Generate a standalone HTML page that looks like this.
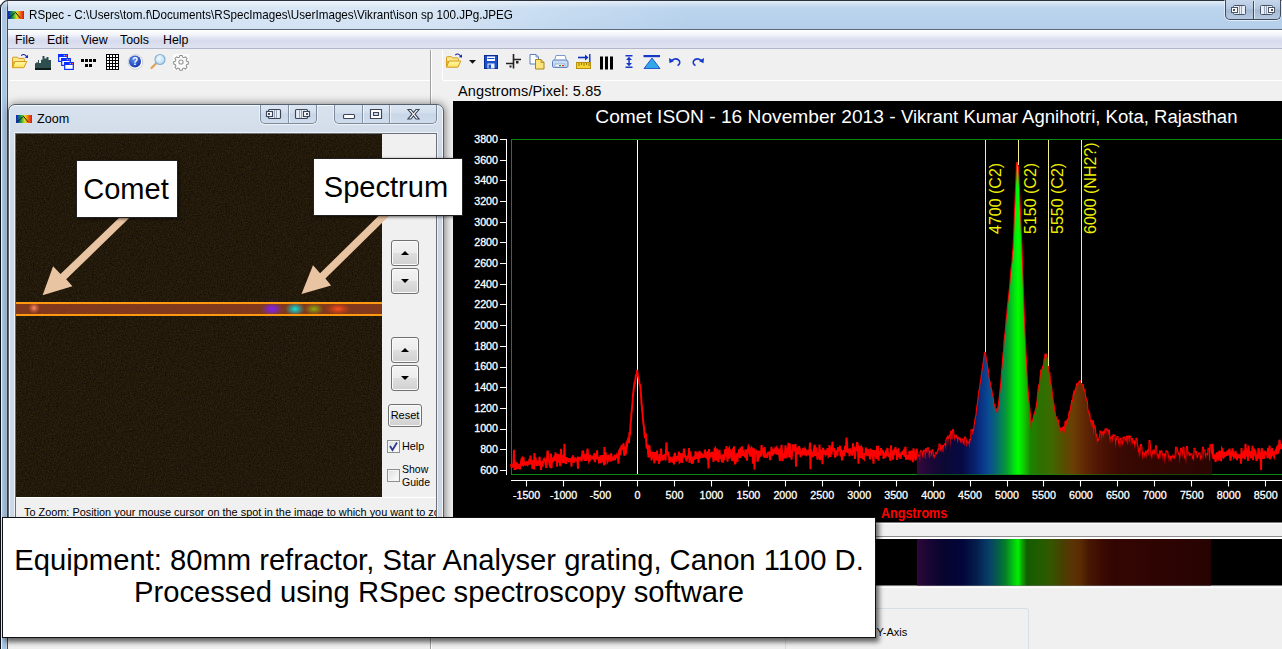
<!DOCTYPE html>
<html><head><meta charset="utf-8"><title>RSpec</title>
<style>
*{box-sizing:border-box;margin:0;padding:0}
html,body{width:1282px;height:649px;overflow:hidden;background:#f0f0f0;font-family:"Liberation Sans",sans-serif;font-size:12px;color:#000}
.abs{position:absolute}
#titlebar{left:0;top:0;width:1282px;height:29px;background:linear-gradient(#bdd5ee 0,#b9d3ed 50%,#b5cfeb 100%);border-top:1px solid #2c323c}
#title{left:29px;top:8px;font-size:12.6px;white-space:nowrap;transform:scaleX(.926);transform-origin:0 0}
#lborder{left:0;top:0;width:8px;height:649px;background:linear-gradient(90deg,#0c1018 0,#0c1018 1px,#eaf3fc 1px,#eaf3fc 2px,#abc9e8 2px,#a6c2e0 6px,#c5d2e0 6px,#c5d2e0 7px,#3c4754 7px,#3c4754 8px)}
#menubar{left:8px;top:29px;width:1274px;height:20px;background:linear-gradient(#ffffff 0,#f3f5fa 25%,#e0e4f1 45%,#d6daec 60%,#dfe3f1 100%);border-top:1px solid #5c6a7c;border-bottom:1px solid #b2b7cb}
#menubar span{position:absolute;top:3px;font-size:12.4px}
.hl{height:1px;background:#fff}
.vl{width:1px}
/* zoom window */
#zw{left:8px;top:104px;width:436px;height:440px;background:linear-gradient(180deg,#d8e2ee,#d3dde9 30px,#cdd8e5 60px);border:1px solid #55616f;border-radius:7px 7px 0 0;box-shadow:1px 0 8px rgba(0,0,0,.5),inset 0 0 0 1px rgba(255,255,255,.75)}
#zw .inner{left:6px;top:28px;width:422px;height:420px;background:#f0f0f0;border:1px solid #6a7078;box-shadow:0 0 0 1px rgba(255,255,255,.6)}
#zimg{left:16px;top:134px;width:366px;height:363px;background:#1c1309;overflow:hidden}
.btn{border:1px solid #707070;border-radius:3px;background:linear-gradient(#f3f3f3 0,#ececec 48%,#dedede 52%,#d0d0d0 100%);box-shadow:inset 0 0 0 1px #fbfbfb}
.tri-up{width:0;height:0;border-left:4px solid transparent;border-right:4px solid transparent;border-bottom:4px solid #000}
.tri-dn{width:0;height:0;border-left:4px solid transparent;border-right:4px solid transparent;border-top:4px solid #000}
.cb{width:13px;height:13px;border:1px solid #8e8f8f;background:linear-gradient(135deg,#dcdcdc,#fff);box-shadow:inset 0 0 0 1px #f4f4f4}
.label{background:#fff;border:1px solid #222;box-shadow:1px 1px 3px rgba(0,0,0,.6);text-align:center;font-size:29.050px}
#cap{left:2px;top:517px;width:874px;height:121px;background:#fff;border:1px solid #111;box-shadow:3px 4px 5px rgba(0,0,0,.6);text-align:center;font-size:29.2px;line-height:32.6px;padding-top:25.5px;white-space:nowrap}
.capbtns{border:1px solid #7c8a9c;border-top:none;border-radius:0 0 5px 5px;background:linear-gradient(#dde7f3 0,#d2deed 45%,#c8d6e8 50%,#cfdcec 100%);box-shadow:0 1px 0 0 rgba(255,255,255,.6),1px 0 0 0 rgba(255,255,255,.5),-1px 0 0 0 rgba(255,255,255,.5)}
.capdiv{width:1px;height:18px;background:#8492a4;box-shadow:1px 0 0 rgba(255,255,255,.6)}
</style></head><body>

<div class="abs" id="titlebar"></div>
<div class="abs" style="left:1px;top:1px;width:700px;height:28px;background:linear-gradient(90deg,rgba(255,255,255,.42) 0,rgba(255,255,255,.42) 430px,rgba(255,255,255,.18) 560px,rgba(255,255,255,0) 690px)"></div>
<div class="abs" id="lborder"></div>
<div class="abs" style="left:1px;top:1px;width:1281px;height:7px;background:linear-gradient(rgba(255,255,255,.55),rgba(255,255,255,0))"></div>
<svg class="abs" style="left:0;top:0" width="10" height="10" viewBox="0 0 10 10"><path d="M0 0 H8 A8 8 0 0 0 0 8 Z" fill="#fff"/><path d="M0.500 8.500 A8 8 0 0 1 8.500 .5" fill="none" stroke="#2c323c" stroke-width="1.200"/></svg>
<!-- app icon -->
<svg class="abs" style="left:8px;top:11px" width="16" height="8" viewBox="0 0 17 9" preserveAspectRatio="none"><defs><linearGradient id="ic"><stop offset="0" stop-color="#1020c0"/><stop offset=".3" stop-color="#10a040"/><stop offset=".55" stop-color="#e8e020"/><stop offset=".8" stop-color="#f06010"/><stop offset="1" stop-color="#e01010"/></linearGradient></defs><rect width="17" height="9" fill="url(#ic)"/><polyline points="1,8 8,1.5 13,8" fill="none" stroke="#111" stroke-width="1"/></svg>
<div class="abs" id="title">RSpec - C:\Users\tom.f\Documents\RSpecImages\UserImages\Vikrant\ison sp 100.JPg.JPEG</div>
<!-- top-right buttons -->
<div class="abs capbtns" style="left:1225px;top:0;width:56px;height:20px;border-color:#3f4a5c;background:linear-gradient(#c6d7ec 0,#b4c7e0 45%,#a4b8d4 52%,#b6c9e1 100%)"></div>
<div class="abs capdiv" style="left:1253px;top:1px;background:#3f4a5c"></div>
<svg class="abs" style="left:1225px;top:0" width="57" height="20" viewBox="1225 0 57 20">
 <g fill="#fff" stroke="#4a5468" stroke-width="1">
  <rect x="1233.500" y="5.500" width="12" height="9" rx="1" fill="#e8eef6"/><rect x="1231.500" y="7.500" width="6" height="5"/><rect x="1233" y="9" width="2" height="2" fill="#4a5468" stroke="none"/>
  <rect x="1260.500" y="5.500" width="12" height="9" rx="1" fill="#e8eef6"/><rect x="1268.500" y="7.500" width="6" height="5"/><rect x="1271" y="9" width="2" height="2" fill="#4a5468" stroke="none"/>
 </g>
 <g stroke="#9aa6b6" stroke-width="1"><path d="M1239.500 6 v8 M1241.500 6 v8 M1264.500 6 v8 M1266.500 6 v8"/></g>
</svg>

<div class="abs" id="menubar">
 <span style="left:7px">File</span><span style="left:39px">Edit</span><span style="left:73px">View</span><span style="left:112px">Tools</span><span style="left:155px">Help</span>
</div>

<!-- toolbar zone -->
<div class="abs hl" style="left:10px;top:80px;width:420px"></div>
<div class="abs vl" style="left:430px;top:50px;height:599px;background:#a0a0a0"></div>
<div class="abs vl" style="left:431px;top:50px;height:599px;background:#fff"></div>
<div class="abs vl" style="left:442px;top:50px;height:30px;background:#fff"></div>
<div class="abs hl" style="left:443px;top:80px;width:839px"></div>
<div class="abs" style="left:458px;top:83px;font-size:14.5px;letter-spacing:.12px;white-space:nowrap">Angstroms/Pixel: 5.85</div>

<svg class="abs" style="left:0;top:50px" width="720" height="28" viewBox="0 50 720 28">
 <defs>
  <linearGradient id="fold" x1="0" y1="0" x2="0" y2="1"><stop offset="0" stop-color="#fffaa8"/><stop offset="1" stop-color="#ffe25a"/></linearGradient>
  <radialGradient id="hb" cx=".4" cy=".35" r=".7"><stop offset="0" stop-color="#5a8cf0"/><stop offset="1" stop-color="#1432a8"/></radialGradient>
  <radialGradient id="lens" cx=".4" cy=".4" r=".7"><stop offset="0" stop-color="#f2fbff"/><stop offset="1" stop-color="#a8d4f0"/></radialGradient>
  <g id="folder">
   <path d="M1.500 15.500 V6 q0 -.8 .8 -.8 h4.200 l1 1.200 h5 q.8 0 .8 .8 V10 h-11z" fill="#ffe88c" stroke="#d49a1c" stroke-width="1"/>
   <path d="M4 9.500 h11.800 l-2.900 6.200 h-11.400z" fill="url(#fold)" stroke="#d49a1c" stroke-width="1"/>
   <path d="M10.200 3.600 q2.800 -2.600 5.300 0.900" fill="none" stroke="#1424a4" stroke-width="1.200"/>
   <path d="M13.900 5.700 l3.200 0.300 -0.300 -3.300z" fill="#1424a4"/>
  </g>
 </defs>
 <!-- LEFT toolbar -->
 <use href="#folder" x="11" y="52"/>
 <!-- histogram -->
 <path d="M35 70 V63.300 h1 V62.500 h2 V60 h1 V63 h2 V59.800 h1.500 V56 h2 V58.400 h2 V57 h2 V60 h2.500 V70z" fill="#2f4f4f"/><rect x="35" y="68" width="16" height="2" fill="#0c1c1c"/>
 <!-- cascade windows -->
 <g stroke="#0a30ff" stroke-width="1.2" fill="#fff">
  <rect x="58.700" y="54.600" width="8.600" height="6.800"/><rect x="58.700" y="54.600" width="8.600" height="1.800" fill="#0a30ff"/>
  <rect x="61.700" y="58.600" width="8.600" height="6.800"/><rect x="61.700" y="58.600" width="8.600" height="1.800" fill="#0a30ff"/>
  <rect x="64.700" y="62.600" width="8.600" height="6.800"/><rect x="64.700" y="62.600" width="8.600" height="1.800" fill="#0a30ff"/>
 </g>
 <g fill="#ff5040"><rect x="65.700" y="55" width="1.300" height="1.300"/><rect x="68.700" y="59" width="1.300" height="1.300"/><rect x="71.700" y="63" width="1.300" height="1.300"/></g>
 <g fill="#a8c8ff"><rect x="63.700" y="55" width="1.200" height="1.200"/><rect x="66.700" y="59" width="1.200" height="1.200"/><rect x="69.700" y="63" width="1.200" height="1.200"/></g>
 <!-- dots -->
 <g fill="#000"><rect x="81" y="59" width="3" height="3"/><rect x="85" y="59" width="3" height="3"/><rect x="89" y="59" width="3" height="3"/><rect x="93" y="59" width="3" height="3"/><rect x="85" y="64" width="3" height="3"/><rect x="89" y="64" width="3" height="3"/></g>
 <!-- grid -->
 <rect x="106" y="54" width="13" height="16" fill="#000"/>
 <g fill="#fff"><rect x="107" y="55" width="2" height="2"/><rect x="110" y="55" width="2" height="2"/><rect x="113" y="55" width="2" height="2"/><rect x="116" y="55" width="2" height="2"/><rect x="107" y="58" width="2" height="2"/><rect x="110" y="58" width="2" height="2"/><rect x="113" y="58" width="2" height="2"/><rect x="116" y="58" width="2" height="2"/><rect x="107" y="61" width="2" height="2"/><rect x="110" y="61" width="2" height="2"/><rect x="113" y="61" width="2" height="2"/><rect x="116" y="61" width="2" height="2"/><rect x="107" y="64" width="2" height="2"/><rect x="110" y="64" width="2" height="2"/><rect x="113" y="64" width="2" height="2"/><rect x="116" y="64" width="2" height="2"/><rect x="107" y="67" width="2" height="2"/><rect x="110" y="67" width="2" height="2"/><rect x="113" y="67" width="2" height="2"/><rect x="116" y="67" width="2" height="2"/></g>
 <!-- help ball -->
 <circle cx="135.500" cy="62" r="7.300" fill="#fff" stroke="#c8ccd8" stroke-width="1"/>
 <circle cx="135" cy="61.500" r="6" fill="url(#hb)"/>
 <text x="135" y="65.300" font-size="10" font-weight="bold" fill="#fff" text-anchor="middle" font-family="Liberation Sans, sans-serif">?</text>
 <!-- magnifier -->
 <line x1="151.500" y1="68" x2="157" y2="62.500" stroke="#e0a050" stroke-width="2.200" stroke-linecap="round"/>
 <circle cx="160" cy="59.500" r="5" fill="url(#lens)" stroke="#8ab0d0" stroke-width="1.200"/>
 <!-- gear -->
 <rect x="173" y="54" width="16" height="16" fill="#fbfbfb"/>
 <g transform="translate(181,62) scale(.92)" fill="none" stroke="#909090" stroke-width="1.1">
  <circle r="2.300"/>
  <path d="M-1.300 -7 h2.600 l.4 1.800 1.500 .6 1.600 -1 1.800 1.800 -1 1.600 .6 1.500 1.800 .4 v2.600 l-1.800 .4 -.6 1.500 1 1.600 -1.800 1.800 -1.600 -1 -1.500 .6 -.4 1.800 h-2.600 l-.4 -1.800 -1.500 -.6 -1.600 1 -1.800 -1.800 1 -1.600 -.6 -1.500 -1.800 -.4 v-2.600 l1.800 -.4 .6 -1.500 -1 -1.600 1.800 -1.800 1.600 1 1.500 -.6z"/>
 </g>

 <!-- RIGHT toolbar -->
 <use href="#folder" x="445" y="51.500"/>
 <path d="M469 60 h7 l-3.500 3.800z" fill="#111"/>
 <!-- save -->
 <rect x="484.500" y="55.500" width="13" height="13" fill="#1c50c8" stroke="#0a2c90" stroke-width="1"/>
 <rect x="487" y="56.500" width="8" height="4.500" fill="#fff"/><rect x="487.500" y="58" width="7" height="1" fill="#1c50c8"/>
 <rect x="487.500" y="63.500" width="7" height="5" fill="#e8eefc"/><rect x="488.500" y="64.500" width="2.500" height="4" fill="#1c50c8"/>
 <!-- crosshair-ish -->
 <g stroke="#222" stroke-width="1.600" fill="none"><path d="M506 63.500 h7.500 M513.500 54 v14.500 M513.500 59.500 h7.500"/></g>
 <rect x="516" y="61" width="2.500" height="2.500" fill="#222"/><rect x="509.500" y="65.500" width="2" height="2" fill="#222"/>
 <!-- copy -->
 <path d="M530 54.500 h6 l2.500 2.500 v7 h-8.500z" fill="#fff" stroke="#5a7cc0" stroke-width="1"/><path d="M536 54.500 v2.500 h2.500" fill="none" stroke="#5a7cc0" stroke-width=".8"/>
 <path d="M535.500 59.500 h5.500 l3 3 v6.500 h-8.500z" fill="#fbe47a" stroke="#a88414" stroke-width="1"/><path d="M541 59.500 v3 h3" fill="none" stroke="#a88414" stroke-width=".8"/>
 <!-- printer -->
 <path d="M556 55.500 h9 l1.500 5 h-12z" fill="#fff" stroke="#7c98c8" stroke-width="1"/>
 <path d="M552.500 61.500 q0 -1.500 2 -1.500 h11 q2.500 0 2.500 2 v4 q0 1.500 -2 1.500 h-11.500 q-2 0 -2 -1.500z" fill="#c8dcf4" stroke="#5a80c0" stroke-width="1"/>
 <rect x="555" y="64" width="10" height="3" fill="#f4f8ff" stroke="#7c98c8" stroke-width=".6"/>
 <rect x="559" y="65" width="2" height="1.200" fill="#30a030"/><rect x="562" y="65" width="2" height="1.200" fill="#e03030"/>
 <!-- ruler with arrow -->
 <rect x="576.500" y="62.500" width="14" height="6" fill="#f4d430" stroke="#b89010" stroke-width="1"/>
 <g stroke="#806000" stroke-width=".8"><path d="M579 63 v3 M581.500 63 v2 M584 63 v3 M586.500 63 v2 M589 63 v3"/></g>
 <path d="M578 57.500 h9" stroke="#1030c0" stroke-width="1.600"/><path d="M585 54.500 l3.500 3 -3.500 3z" fill="#1030c0"/><path d="M589.800 54 v8" stroke="#1030c0" stroke-width="1.400"/>
 <!-- bars -->
 <rect x="600" y="56.500" width="3" height="13" fill="#000"/><rect x="605" y="56.500" width="3" height="13" fill="#000"/><rect x="610" y="56.500" width="3" height="13" fill="#000"/>
 <!-- I-beam arrows -->
 <g fill="#1438c8"><rect x="625.500" y="55" width="7" height="1.500"/><rect x="625.500" y="66.500" width="7" height="1.500"/><rect x="628.300" y="58" width="1.500" height="7"/><path d="M629 56.800 l3 3.200 h-6z"/><path d="M629 66.200 l3 -3.200 h-6z"/></g>
 <!-- triangle with bar -->
 <rect x="643.500" y="55" width="16.500" height="2.200" fill="#1438c8"/><path d="M644 68.500 l8 -10.500 8 10.500z" fill="#30a8e8" stroke="#1438c8" stroke-width=".8"/>
 <!-- undo / redo -->
 <path d="M671.500 60.500 q5 -3.500 8 0.500 q1 3 -2 4.500" fill="none" stroke="#1438c8" stroke-width="1.500"/><path d="M669 58 l.5 5.200 4.700 -2.200z" fill="#1438c8"/>
 <path d="M701.500 60.500 q-5 -3.500 -8 0.500 q-1 3 2 4.500" fill="none" stroke="#1438c8" stroke-width="1.500"/><path d="M704 58 l-.5 5.200 -4.700 -2.200z" fill="#1438c8"/>
</svg>



<svg style="position:absolute;left:0;top:0" width="1282" height="649" viewBox="0 0 1282 649" font-family="Liberation Sans, sans-serif">
<defs><linearGradient id="rb" gradientUnits="userSpaceOnUse" x1="917" x2="1212" y1="0" y2="0"><stop offset="0.0045" stop-color="#32083a"/><stop offset="0.0421" stop-color="#1e0838"/><stop offset="0.0922" stop-color="#0c0834"/><stop offset="0.1548" stop-color="#060a44"/><stop offset="0.2049" stop-color="#082878"/><stop offset="0.2400" stop-color="#0a4894"/><stop offset="0.2700" stop-color="#086870"/><stop offset="0.3051" stop-color="#05a030"/><stop offset="0.3301" stop-color="#04e010"/><stop offset="0.3427" stop-color="#00ff00"/><stop offset="0.3602" stop-color="#10d000"/><stop offset="0.3852" stop-color="#1c8400"/><stop offset="0.4178" stop-color="#2c7000"/><stop offset="0.4554" stop-color="#3e6a00"/><stop offset="0.4930" stop-color="#545000"/><stop offset="0.5305" stop-color="#6c3e04"/><stop offset="0.5681" stop-color="#602805"/><stop offset="0.6182" stop-color="#4e1404"/><stop offset="0.6758" stop-color="#400a02"/><stop offset="0.6808" stop-color="#3a0a02"/><stop offset="0.8061" stop-color="#330602"/><stop offset="1.0065" stop-color="#2a0502"/></linearGradient><linearGradient id="rb2" gradientUnits="userSpaceOnUse" x1="917" x2="1212" y1="0" y2="0"><stop offset="0.0045" stop-color="#2c0638"/><stop offset="0.0421" stop-color="#180634"/><stop offset="0.0922" stop-color="#06042e"/><stop offset="0.1548" stop-color="#02063a"/><stop offset="0.2049" stop-color="#04204e"/><stop offset="0.2400" stop-color="#083c68"/><stop offset="0.2700" stop-color="#065850"/><stop offset="0.3001" stop-color="#048028"/><stop offset="0.3276" stop-color="#04c810"/><stop offset="0.3427" stop-color="#00f000"/><stop offset="0.3552" stop-color="#0ca800"/><stop offset="0.3727" stop-color="#145c00"/><stop offset="0.4178" stop-color="#245c00"/><stop offset="0.4554" stop-color="#345600"/><stop offset="0.4930" stop-color="#484000"/><stop offset="0.5305" stop-color="#5c3204"/><stop offset="0.5556" stop-color="#5a2a04"/><stop offset="0.5806" stop-color="#481803"/><stop offset="0.6307" stop-color="#3a0a02"/><stop offset="0.6758" stop-color="#300402"/><stop offset="0.6808" stop-color="#340602"/><stop offset="0.8061" stop-color="#2e0402"/><stop offset="1.0065" stop-color="#260302"/></linearGradient></defs>
<rect x="453" y="101" width="830" height="421.5" fill="#000"/>
<text x="595.3" y="123" fill="#fff" font-size="18.85" textLength="300.3" lengthAdjust="spacingAndGlyphs">Comet ISON - 16 November 2013 -</text><text x="900.9" y="123" fill="#fff" font-size="18.85" textLength="336.6" lengthAdjust="spacingAndGlyphs">Vikrant Kumar Agnihotri, Kota, Rajasthan</text>
<rect x="511.5" y="139.5" width="780" height="335" fill="none" stroke="#0a8a0a"/>
<g fill="#fff" font-size="10.7" stroke="#fff" stroke-width=".3"><line x1="500" x2="506" y1="470.5" y2="470.5" stroke="#fff" stroke-width="1"/><text x="498" y="473.8" text-anchor="end">600</text><line x1="500" x2="506" y1="449.5" y2="449.5" stroke="#fff" stroke-width="1"/><text x="498" y="453.1" text-anchor="end">800</text><line x1="500" x2="506" y1="429.5" y2="429.5" stroke="#fff" stroke-width="1"/><text x="498" y="432.4" text-anchor="end">1000</text><line x1="500" x2="506" y1="408.5" y2="408.5" stroke="#fff" stroke-width="1"/><text x="498" y="411.7" text-anchor="end">1200</text><line x1="500" x2="506" y1="387.5" y2="387.5" stroke="#fff" stroke-width="1"/><text x="498" y="391.0" text-anchor="end">1400</text><line x1="500" x2="506" y1="367.5" y2="367.5" stroke="#fff" stroke-width="1"/><text x="498" y="370.4" text-anchor="end">1600</text><line x1="500" x2="506" y1="346.5" y2="346.5" stroke="#fff" stroke-width="1"/><text x="498" y="349.7" text-anchor="end">1800</text><line x1="500" x2="506" y1="325.5" y2="325.5" stroke="#fff" stroke-width="1"/><text x="498" y="329.0" text-anchor="end">2000</text><line x1="500" x2="506" y1="304.5" y2="304.5" stroke="#fff" stroke-width="1"/><text x="498" y="308.3" text-anchor="end">2200</text><line x1="500" x2="506" y1="284.5" y2="284.5" stroke="#fff" stroke-width="1"/><text x="498" y="287.6" text-anchor="end">2400</text><line x1="500" x2="506" y1="263.5" y2="263.5" stroke="#fff" stroke-width="1"/><text x="498" y="266.9" text-anchor="end">2600</text><line x1="500" x2="506" y1="242.5" y2="242.5" stroke="#fff" stroke-width="1"/><text x="498" y="246.2" text-anchor="end">2800</text><line x1="500" x2="506" y1="222.5" y2="222.5" stroke="#fff" stroke-width="1"/><text x="498" y="225.5" text-anchor="end">3000</text><line x1="500" x2="506" y1="201.5" y2="201.5" stroke="#fff" stroke-width="1"/><text x="498" y="204.9" text-anchor="end">3200</text><line x1="500" x2="506" y1="180.5" y2="180.5" stroke="#fff" stroke-width="1"/><text x="498" y="184.2" text-anchor="end">3400</text><line x1="500" x2="506" y1="160.5" y2="160.5" stroke="#fff" stroke-width="1"/><text x="498" y="163.5" text-anchor="end">3600</text><line x1="500" x2="506" y1="139.5" y2="139.5" stroke="#fff" stroke-width="1"/><text x="498" y="142.8" text-anchor="end">3800</text><line x1="526.5" x2="526.5" y1="480" y2="486.5" stroke="#fff" stroke-width="1.1"/><text x="526.6" y="499.4" text-anchor="middle">-1500</text><line x1="563.5" x2="563.5" y1="480" y2="486.5" stroke="#fff" stroke-width="1.1"/><text x="563.6" y="499.4" text-anchor="middle">-1000</text><line x1="600.5" x2="600.5" y1="480" y2="486.5" stroke="#fff" stroke-width="1.1"/><text x="600.5" y="499.4" text-anchor="middle">-500</text><line x1="637.5" x2="637.5" y1="480" y2="486.5" stroke="#fff" stroke-width="1.1"/><text x="637.5" y="499.4" text-anchor="middle">0</text><line x1="674.5" x2="674.5" y1="480" y2="486.5" stroke="#fff" stroke-width="1.1"/><text x="674.5" y="499.4" text-anchor="middle">500</text><line x1="711.5" x2="711.5" y1="480" y2="486.5" stroke="#fff" stroke-width="1.1"/><text x="711.4" y="499.4" text-anchor="middle">1000</text><line x1="748.5" x2="748.5" y1="480" y2="486.5" stroke="#fff" stroke-width="1.1"/><text x="748.4" y="499.4" text-anchor="middle">1500</text><line x1="785.5" x2="785.5" y1="480" y2="486.5" stroke="#fff" stroke-width="1.1"/><text x="785.3" y="499.4" text-anchor="middle">2000</text><line x1="822.5" x2="822.5" y1="480" y2="486.5" stroke="#fff" stroke-width="1.1"/><text x="822.2" y="499.4" text-anchor="middle">2500</text><line x1="859.5" x2="859.5" y1="480" y2="486.5" stroke="#fff" stroke-width="1.1"/><text x="859.2" y="499.4" text-anchor="middle">3000</text><line x1="896.5" x2="896.5" y1="480" y2="486.5" stroke="#fff" stroke-width="1.1"/><text x="896.1" y="499.4" text-anchor="middle">3500</text><line x1="933.5" x2="933.5" y1="480" y2="486.5" stroke="#fff" stroke-width="1.1"/><text x="933.1" y="499.4" text-anchor="middle">4000</text><line x1="970.5" x2="970.5" y1="480" y2="486.5" stroke="#fff" stroke-width="1.1"/><text x="970.0" y="499.4" text-anchor="middle">4500</text><line x1="1007.5" x2="1007.5" y1="480" y2="486.5" stroke="#fff" stroke-width="1.1"/><text x="1007.0" y="499.4" text-anchor="middle">5000</text><line x1="1043.5" x2="1043.5" y1="480" y2="486.5" stroke="#fff" stroke-width="1.1"/><text x="1044.0" y="499.4" text-anchor="middle">5500</text><line x1="1080.5" x2="1080.5" y1="480" y2="486.5" stroke="#fff" stroke-width="1.1"/><text x="1080.9" y="499.4" text-anchor="middle">6000</text><line x1="1117.5" x2="1117.5" y1="480" y2="486.5" stroke="#fff" stroke-width="1.1"/><text x="1117.8" y="499.4" text-anchor="middle">6500</text><line x1="1154.5" x2="1154.5" y1="480" y2="486.5" stroke="#fff" stroke-width="1.1"/><text x="1154.8" y="499.4" text-anchor="middle">7000</text><line x1="1191.5" x2="1191.5" y1="480" y2="486.5" stroke="#fff" stroke-width="1.1"/><text x="1191.8" y="499.4" text-anchor="middle">7500</text><line x1="1228.5" x2="1228.5" y1="480" y2="486.5" stroke="#fff" stroke-width="1.1"/><text x="1228.7" y="499.4" text-anchor="middle">8000</text><line x1="1265.5" x2="1265.5" y1="480" y2="486.5" stroke="#fff" stroke-width="1.1"/><text x="1265.7" y="499.4" text-anchor="middle">8500</text></g>
<line x1="506.5" x2="506.5" y1="139" y2="475" stroke="#fff"/>
<line x1="511" x2="1283" y1="480.5" y2="480.5" stroke="#fff" stroke-width="1"/>
<line x1="637.5" x2="637.5" y1="140" y2="474" stroke="#fff"/>
<polyline points="511.0,464.1 511.5,466.8 512.0,465.5 512.5,466.4 513.0,465.7 513.5,463.1 514.0,449.8 514.5,470.0 515.0,462.1 515.5,470.0 516.0,463.2 516.5,464.0 517.0,462.4 517.5,468.8 518.0,464.4 518.5,469.0 519.0,466.0 519.5,463.9 520.0,469.4 520.5,465.3 521.0,462.3 521.5,459.2 522.0,458.4 522.5,464.7 523.0,465.1 523.5,457.3 524.0,464.6 524.5,464.4 525.0,464.6 525.5,462.4 526.0,465.4 526.5,461.1 527.0,464.7 527.5,465.1 528.0,463.2 528.5,463.5 529.0,461.5 529.5,458.9 530.0,464.4 530.5,455.5 531.0,462.0 531.5,461.9 532.0,462.9 532.5,468.9 533.0,461.1 533.5,461.3 534.0,469.4 534.5,453.1 535.0,460.9 535.5,457.3 536.0,461.0 536.5,466.0 537.0,462.1 537.5,465.8 538.0,460.9 538.5,464.5 539.0,464.6 539.5,456.7 540.0,461.5 540.5,464.8 541.0,470.0 541.5,461.2 542.0,463.3 542.5,466.7 543.0,462.2 543.5,460.2 544.0,459.3 544.5,461.9 545.0,458.5 545.5,463.7 546.0,466.1 546.5,467.9 547.0,459.4 547.5,450.6 548.0,452.7 548.5,459.7 549.0,461.1 549.5,464.1 550.0,466.5 550.5,466.9 551.0,453.6 551.5,467.9 552.0,460.9 552.5,461.0 553.0,457.6 553.5,459.5 554.0,458.0 554.5,459.5 555.0,461.0 555.5,452.3 556.0,459.0 556.5,456.5 557.0,466.6 557.5,454.1 558.0,461.4 558.5,461.6 559.0,457.0 559.5,454.4 560.0,464.8 560.5,466.0 561.0,448.8 561.5,460.8 562.0,458.6 562.5,457.5 563.0,463.1 563.5,460.2 564.0,462.2 564.5,443.9 565.0,462.4 565.5,462.5 566.0,463.9 566.5,457.3 567.0,458.4 567.5,460.3 568.0,460.5 568.5,458.5 569.0,462.2 569.5,458.2 570.0,460.1 570.5,460.5 571.0,458.4 571.5,466.8 572.0,457.1 572.5,458.6 573.0,455.4 573.5,461.1 574.0,462.7 574.5,458.9 575.0,458.5 575.5,460.2 576.0,460.0 576.5,460.5 577.0,459.3 577.5,462.2 578.0,468.7 578.5,456.7 579.0,458.9 579.5,459.2 580.0,458.6 580.5,459.1 581.0,458.0 581.5,461.5 582.0,457.3 582.5,451.4 583.0,451.3 583.5,453.6 584.0,459.6 584.5,456.9 585.0,461.0 585.5,454.4 586.0,460.6 586.5,459.1 587.0,455.0 587.5,448.5 588.0,454.0 588.5,458.5 589.0,461.1 589.5,459.8 590.0,454.9 590.5,458.6 591.0,457.5 591.5,457.3 592.0,457.9 592.5,458.1 593.0,457.0 593.5,455.6 594.0,460.2 594.5,453.1 595.0,462.2 595.5,457.4 596.0,456.4 596.5,457.2 597.0,450.4 597.5,457.7 598.0,458.4 598.5,458.1 599.0,461.5 599.5,460.7 600.0,463.2 600.5,455.3 601.0,462.8 601.5,458.5 602.0,459.3 602.5,455.1 603.0,459.0 603.5,460.9 604.0,465.1 604.5,447.1 605.0,464.0 605.5,452.1 606.0,455.6 606.5,459.9 607.0,455.7 607.5,461.7 608.0,460.7 608.5,454.6 609.0,458.5 609.5,458.8 610.0,456.6 610.5,461.6 611.0,453.2 611.5,456.2 612.0,459.7 612.5,459.7 613.0,456.6 613.5,460.2 614.0,457.4 614.5,456.5 615.0,460.0 615.5,456.3 616.0,456.2 616.5,457.9 617.0,455.2 617.5,456.3 618.0,456.9 618.5,463.8 619.0,451.2 619.5,450.2 620.0,454.1 620.5,455.2 621.0,448.3 621.5,446.4 622.0,447.1 622.5,448.5 623.0,449.2 623.5,443.2 624.0,452.1 624.5,455.8 625.0,446.4 625.5,454.8 626.0,452.1 626.5,444.5 627.0,445.5 627.5,440.6 628.0,440.2 628.5,437.2 629.0,443.1 629.5,432.1 630.0,435.4 630.5,424.8 631.0,419.9 631.5,413.1 632.0,407.8 632.5,403.1 633.0,394.9 633.5,390.8 634.0,386.4 634.5,382.8 635.0,382.9 635.5,378.7 636.0,374.5 636.5,376.0 637.0,370.0 637.5,372.6 638.0,376.0 638.5,377.7 639.0,380.0 639.5,384.0 640.0,384.8 640.5,388.0 641.0,394.7 641.5,403.7 642.0,407.8 642.5,413.3 643.0,419.8 643.5,424.3 644.0,427.4 644.5,433.4 645.0,438.1 645.5,433.0 646.0,435.8 646.5,446.8 647.0,448.6 647.5,444.3 648.0,450.8 648.5,457.3 649.0,456.2 649.5,445.3 650.0,457.2 650.5,452.1 651.0,453.1 651.5,460.5 652.0,455.4 652.5,458.7 653.0,451.8 653.5,454.4 654.0,458.9 654.5,463.3 655.0,452.0 655.5,455.3 656.0,456.3 656.5,460.0 657.0,450.5 657.5,460.6 658.0,457.0 658.5,457.3 659.0,463.8 659.5,454.1 660.0,461.2 660.5,459.6 661.0,448.5 661.5,455.7 662.0,457.5 662.5,458.6 663.0,460.1 663.5,455.2 664.0,457.4 664.5,454.2 665.0,457.5 665.5,460.4 666.0,451.0 666.5,442.2 667.0,452.9 667.5,454.0 668.0,451.8 668.5,454.2 669.0,457.3 669.5,462.9 670.0,458.2 670.5,457.9 671.0,461.7 671.5,458.0 672.0,460.7 672.5,458.1 673.0,462.6 673.5,456.4 674.0,464.5 674.5,454.3 675.0,452.9 675.5,461.5 676.0,459.2 676.5,459.9 677.0,456.1 677.5,457.4 678.0,458.3 678.5,455.1 679.0,451.7 679.5,462.2 680.0,461.6 680.5,456.2 681.0,453.3 681.5,454.8 682.0,462.9 682.5,458.4 683.0,454.4 683.5,453.6 684.0,448.5 684.5,455.7 685.0,455.3 685.5,457.7 686.0,457.8 686.5,461.3 687.0,457.3 687.5,457.6 688.0,456.2 688.5,456.8 689.0,448.1 689.5,463.0 690.0,454.0 690.5,453.3 691.0,457.7 691.5,458.1 692.0,463.9 692.5,459.0 693.0,463.3 693.5,456.4 694.0,458.7 694.5,457.8 695.0,459.4 695.5,451.3 696.0,453.2 696.5,455.7 697.0,458.9 697.5,456.3 698.0,452.5 698.5,462.8 699.0,454.1 699.5,450.9 700.0,458.5 700.5,452.5 701.0,454.8 701.5,453.9 702.0,454.3 702.5,457.8 703.0,455.8 703.5,454.3 704.0,457.1 704.5,454.9 705.0,449.6 705.5,457.8 706.0,453.5 706.5,453.2 707.0,451.9 707.5,459.8 708.0,451.1 708.5,468.4 709.0,449.0 709.5,458.5 710.0,456.9 710.5,452.6 711.0,456.0 711.5,455.6 712.0,451.7 712.5,455.7 713.0,457.0 713.5,461.9 714.0,457.1 714.5,449.2 715.0,448.5 715.5,459.3 716.0,459.5 716.5,452.6 717.0,448.5 717.5,454.0 718.0,459.9 718.5,462.1 719.0,456.2 719.5,449.9 720.0,456.6 720.5,458.6 721.0,455.4 721.5,459.0 722.0,462.0 722.5,454.2 723.0,462.7 723.5,454.5 724.0,460.2 724.5,457.0 725.0,449.2 725.5,455.1 726.0,454.6 726.5,446.0 727.0,456.0 727.5,461.7 728.0,452.5 728.5,449.6 729.0,448.6 729.5,458.6 730.0,449.4 730.5,456.6 731.0,450.9 731.5,452.7 732.0,458.8 732.5,461.1 733.0,448.4 733.5,453.2 734.0,446.2 734.5,460.3 735.0,463.5 735.5,463.2 736.0,459.2 736.5,455.1 737.0,455.9 737.5,461.6 738.0,452.5 738.5,456.5 739.0,449.4 739.5,455.7 740.0,457.9 740.5,447.6 741.0,456.6 741.5,451.2 742.0,446.4 742.5,455.8 743.0,450.2 743.5,455.1 744.0,455.4 744.5,453.4 745.0,457.3 745.5,449.3 746.0,456.3 746.5,455.8 747.0,460.6 747.5,450.2 748.0,450.0 748.5,446.6 749.0,447.6 749.5,453.0 750.0,454.6 750.5,456.6 751.0,449.4 751.5,447.8 752.0,448.5 752.5,451.9 753.0,463.8 753.5,456.9 754.0,448.4 754.5,469.6 755.0,451.5 755.5,451.4 756.0,454.5 756.5,451.3 757.0,452.0 757.5,461.7 758.0,460.1 758.5,453.1 759.0,454.0 759.5,450.9 760.0,455.9 760.5,455.1 761.0,456.2 761.5,445.0 762.0,448.7 762.5,450.3 763.0,449.8 763.5,455.4 764.0,457.1 764.5,447.1 765.0,451.9 765.5,457.8 766.0,455.7 766.5,454.2 767.0,457.8 767.5,454.0 768.0,451.9 768.5,454.6 769.0,452.7 769.5,451.6 770.0,460.2 770.5,454.2 771.0,454.4 771.5,446.9 772.0,452.2 772.5,448.9 773.0,454.1 773.5,453.4 774.0,453.0 774.5,450.8 775.0,449.2 775.5,451.2 776.0,449.6 776.5,448.5 777.0,454.3 777.5,447.8 778.0,454.9 778.5,449.7 779.0,451.5 779.5,457.2 780.0,460.9 780.5,448.3 781.0,449.8 781.5,444.9 782.0,451.7 782.5,461.0 783.0,457.4 783.5,455.5 784.0,453.4 784.5,458.5 785.0,452.8 785.5,445.3 786.0,453.3 786.5,458.2 787.0,450.3 787.5,451.2 788.0,448.7 788.5,442.9 789.0,457.2 789.5,456.2 790.0,443.7 790.5,452.4 791.0,451.9 791.5,459.7 792.0,453.9 792.5,451.6 793.0,444.4 793.5,449.3 794.0,448.9 794.5,449.8 795.0,445.6 795.5,444.1 796.0,466.7 796.5,449.4 797.0,452.5 797.5,447.6 798.0,454.3 798.5,452.9 799.0,446.1 799.5,448.2 800.0,449.5 800.5,457.3 801.0,452.4 801.5,453.1 802.0,453.8 802.5,450.6 803.0,448.9 803.5,448.7 804.0,453.9 804.5,454.4 805.0,454.4 805.5,449.7 806.0,450.8 806.5,454.3 807.0,453.5 807.5,451.9 808.0,451.4 808.5,455.3 809.0,453.8 809.5,451.3 810.0,442.6 810.5,469.2 811.0,449.5 811.5,451.7 812.0,453.9 812.5,454.2 813.0,457.1 813.5,455.2 814.0,450.2 814.5,444.8 815.0,446.6 815.5,455.9 816.0,448.2 816.5,448.6 817.0,455.4 817.5,459.6 818.0,457.4 818.5,452.5 819.0,455.7 819.5,444.6 820.0,460.2 820.5,455.5 821.0,451.5 821.5,452.2 822.0,451.6 822.5,464.3 823.0,447.9 823.5,450.0 824.0,454.5 824.5,453.0 825.0,450.5 825.5,453.7 826.0,452.4 826.5,449.9 827.0,455.2 827.5,448.1 828.0,452.7 828.5,456.3 829.0,455.7 829.5,445.0 830.0,452.5 830.5,456.9 831.0,446.9 831.5,454.6 832.0,447.4 832.5,441.7 833.0,451.1 833.5,449.5 834.0,448.1 834.5,452.0 835.0,456.7 835.5,456.5 836.0,450.3 836.5,452.1 837.0,451.9 837.5,455.7 838.0,447.1 838.5,450.0 839.0,449.1 839.5,449.6 840.0,445.7 840.5,456.4 841.0,449.2 841.5,452.9 842.0,460.5 842.5,456.2 843.0,452.5 843.5,450.7 844.0,450.7 844.5,456.1 845.0,445.9 845.5,452.0 846.0,450.4 846.5,437.6 847.0,442.0 847.5,452.9 848.0,449.6 848.5,450.2 849.0,448.7 849.5,456.2 850.0,448.3 850.5,452.9 851.0,451.3 851.5,452.0 852.0,455.6 852.5,451.8 853.0,443.4 853.5,453.0 854.0,446.6 854.5,452.2 855.0,458.9 855.5,450.9 856.0,447.8 856.5,450.9 857.0,443.0 857.5,443.1 858.0,448.1 858.5,463.6 859.0,450.1 859.5,445.8 860.0,451.8 860.5,457.9 861.0,449.9 861.5,447.4 862.0,448.4 862.5,459.1 863.0,454.7 863.5,457.7 864.0,458.6 864.5,453.0 865.0,454.6 865.5,454.3 866.0,447.5 866.5,451.7 867.0,454.7 867.5,456.0 868.0,449.2 868.5,454.4 869.0,454.3 869.5,455.3 870.0,459.4 870.5,448.6 871.0,456.2 871.5,452.2 872.0,456.6 872.5,449.8 873.0,457.6 873.5,463.6 874.0,450.0 874.5,456.1 875.0,453.4 875.5,450.7 876.0,457.0 876.5,458.8 877.0,445.8 877.5,456.1 878.0,445.7 878.5,460.7 879.0,451.2 879.5,454.0 880.0,451.2 880.5,455.7 881.0,448.1 881.5,453.0 882.0,450.1 882.5,451.9 883.0,450.7 883.5,459.0 884.0,453.0 884.5,454.9 885.0,452.6 885.5,457.6 886.0,450.3 886.5,456.0 887.0,450.0 887.5,448.0 888.0,454.4 888.5,455.7 889.0,455.0 889.5,453.4 890.0,457.0 890.5,460.8 891.0,445.3 891.5,456.0 892.0,452.6 892.5,452.8 893.0,459.6 893.5,450.0 894.0,455.2 894.5,450.6 895.0,451.2 895.5,447.2 896.0,452.2 896.5,449.5 897.0,460.0 897.5,455.5 898.0,450.3 898.5,449.7 899.0,454.8 899.5,457.2 900.0,454.0 900.5,458.8 901.0,455.5 901.5,452.2 902.0,453.9 902.5,451.2 903.0,454.8 903.5,452.0 904.0,453.3 904.5,456.5 905.0,449.9 905.5,446.7 906.0,459.6 906.5,457.2 907.0,457.8 907.5,455.0 908.0,459.5 908.5,456.9 909.0,455.8 909.5,450.9 910.0,457.5 910.5,460.3 911.0,455.6 911.5,450.7 912.0,454.0 912.5,455.2 913.0,462.3 913.5,448.3 914.0,452.5 914.5,453.2 915.0,454.9 915.5,460.4 916.0,457.9 916.5,448.7 917.0,450.9 917.5,455.4 918.0,455.3 918.5,456.4 919.0,456.5 919.5,455.3 920.0,462.9 920.5,452.0 921.0,451.1 921.5,451.5 922.0,453.7 922.5,456.6 923.0,458.0 923.5,456.1 924.0,449.9 924.5,451.8 925.0,458.8 925.5,457.9 926.0,448.4 926.5,453.4 927.0,451.8 927.5,452.2 928.0,447.4 928.5,451.1 929.0,458.5 929.5,457.0 930.0,453.1 930.5,450.8 931.0,457.7 931.5,453.2 932.0,456.6 932.5,449.3 933.0,455.6 933.5,457.8 934.0,455.0 934.5,459.2 935.0,456.2 935.5,455.1 936.0,452.2 936.5,454.7 937.0,454.0 937.5,452.4 938.0,450.8 938.5,448.8 939.0,452.6 939.5,443.6 940.0,452.3 940.5,450.3 941.0,448.4 941.5,450.2 942.0,452.1 942.5,451.1 943.0,445.0 943.5,454.2 944.0,445.9 944.5,445.1 945.0,444.4 945.5,447.1 946.0,450.0 946.5,439.6 947.0,438.5 947.5,437.7 948.0,446.4 948.5,438.8 949.0,438.2 949.5,437.5 950.0,434.8 950.5,449.3 951.0,430.9 951.5,440.2 952.0,437.5 952.5,440.0 953.0,429.2 953.5,434.4 954.0,438.9 954.5,440.8 955.0,436.9 955.5,435.3 956.0,438.8 956.5,437.2 957.0,438.7 957.5,442.2 958.0,442.6 958.5,436.8 959.0,439.8 959.5,440.4 960.0,439.6 960.5,442.3 961.0,443.1 961.5,440.8 962.0,444.1 962.5,438.5 963.0,445.0 963.5,442.1 964.0,444.4 964.5,445.6 965.0,436.8 965.5,438.4 966.0,440.7 966.5,447.0 967.0,445.3 967.5,440.8 968.0,445.7 968.5,441.9 969.0,443.5 969.5,448.0 970.0,439.8 970.5,439.7 971.0,443.8 971.5,429.2 972.0,430.7 972.5,434.5 973.0,434.5 973.5,430.5 974.0,430.9 974.5,425.5 975.0,422.3 975.5,418.8 976.0,416.7 976.5,414.8 977.0,408.3 977.5,405.2 978.0,402.5 978.5,397.5 979.0,394.2 979.5,389.7 980.0,388.8 980.5,383.4 981.0,381.8 981.5,377.0 982.0,374.2 982.5,369.5 983.0,367.4 983.5,363.4 984.0,360.2 984.5,355.8 985.0,352.2 985.5,357.0 986.0,359.5 986.5,362.0 987.0,365.7 987.5,368.8 988.0,369.9 988.5,376.6 989.0,379.9 989.5,381.4 990.0,383.6 990.5,387.4 991.0,389.0 991.5,391.1 992.0,394.7 992.5,396.1 993.0,398.9 993.5,403.4 994.0,406.0 994.5,405.6 995.0,409.3 995.5,410.2 996.0,408.6 996.5,412.4 997.0,411.7 997.5,410.1 998.0,412.4 998.5,407.7 999.0,403.1 999.5,398.6 1000.0,394.5 1000.5,390.0 1001.0,385.0 1001.5,380.0 1002.0,371.3 1002.5,367.3 1003.0,359.9 1003.5,353.5 1004.0,350.7 1004.5,341.1 1005.0,335.6 1005.5,333.1 1006.0,327.2 1006.5,320.0 1007.0,316.2 1007.5,311.7 1008.0,304.3 1008.5,301.2 1009.0,296.0 1009.5,292.0 1010.0,286.7 1010.5,281.1 1011.0,274.0 1011.5,269.1 1012.0,264.6 1012.5,261.4 1013.0,252.2 1013.5,248.5 1014.0,237.1 1014.5,224.3 1015.0,210.1 1015.5,200.9 1016.0,186.0 1016.5,176.9 1017.0,162.3 1017.5,164.6 1018.0,167.0 1018.5,177.3 1019.0,188.7 1019.5,201.0 1020.0,211.8 1020.5,223.8 1021.0,235.3 1021.5,246.3 1022.0,262.3 1022.5,277.0 1023.0,290.3 1023.5,306.0 1024.0,318.8 1024.5,331.3 1025.0,341.2 1025.5,352.4 1026.0,359.8 1026.5,371.9 1027.0,381.5 1027.5,389.1 1028.0,394.1 1028.5,401.0 1029.0,404.1 1029.5,410.0 1030.0,414.4 1030.5,422.4 1031.0,430.6 1031.5,432.9 1032.0,423.1 1032.5,420.9 1033.0,420.4 1033.5,419.1 1034.0,416.2 1034.5,414.2 1035.0,413.3 1035.5,411.3 1036.0,409.2 1036.5,407.9 1037.0,404.0 1037.5,400.8 1038.0,394.4 1038.5,390.5 1039.0,385.6 1039.5,384.7 1040.0,383.3 1040.5,377.7 1041.0,372.3 1041.5,373.3 1042.0,370.4 1042.5,368.6 1043.0,367.0 1043.5,367.4 1044.0,363.9 1044.5,359.0 1045.0,357.5 1045.5,354.4 1046.0,354.5 1046.5,357.4 1047.0,359.1 1047.5,363.1 1048.0,365.0 1048.5,371.3 1049.0,374.8 1049.5,374.2 1050.0,381.2 1050.5,384.6 1051.0,385.4 1051.5,390.1 1052.0,394.7 1052.5,398.2 1053.0,402.5 1053.5,403.9 1054.0,408.0 1054.5,410.7 1055.0,414.2 1055.5,419.1 1056.0,418.0 1056.5,416.7 1057.0,422.0 1057.5,421.9 1058.0,419.7 1058.5,424.7 1059.0,427.6 1059.5,428.0 1060.0,429.4 1060.5,431.0 1061.0,431.5 1061.5,427.6 1062.0,431.4 1062.5,430.1 1063.0,430.1 1063.5,426.4 1064.0,433.3 1064.5,432.8 1065.0,428.1 1065.5,420.7 1066.0,423.3 1066.5,426.6 1067.0,422.4 1067.5,420.0 1068.0,420.1 1068.5,419.5 1069.0,416.4 1069.5,411.3 1070.0,413.4 1070.5,410.6 1071.0,407.5 1071.5,405.3 1072.0,401.7 1072.5,402.2 1073.0,400.3 1073.5,395.5 1074.0,393.1 1074.5,394.5 1075.0,392.9 1075.5,390.4 1076.0,391.5 1076.5,387.5 1077.0,383.3 1077.5,386.1 1078.0,385.9 1078.5,383.8 1079.0,382.1 1079.5,381.8 1080.0,382.7 1080.5,380.2 1081.0,384.3 1081.5,384.2 1082.0,384.6 1082.5,384.8 1083.0,390.1 1083.5,388.7 1084.0,391.7 1084.5,391.2 1085.0,395.6 1085.5,397.0 1086.0,400.0 1086.5,400.5 1087.0,401.6 1087.5,409.4 1088.0,412.1 1088.5,412.0 1089.0,416.1 1089.5,415.3 1090.0,421.2 1090.5,423.2 1091.0,419.8 1091.5,426.2 1092.0,425.4 1092.5,429.3 1093.0,420.3 1093.5,435.0 1094.0,432.7 1094.5,426.8 1095.0,427.8 1095.5,434.6 1096.0,438.9 1096.5,434.0 1097.0,444.2 1097.5,440.5 1098.0,440.1 1098.5,441.1 1099.0,440.0 1099.5,437.3 1100.0,436.4 1100.5,432.0 1101.0,432.5 1101.5,442.1 1102.0,431.6 1102.5,436.2 1103.0,432.7 1103.5,438.7 1104.0,433.2 1104.5,434.1 1105.0,431.9 1105.5,428.7 1106.0,436.4 1106.5,428.4 1107.0,430.6 1107.5,430.5 1108.0,432.6 1108.5,435.5 1109.0,429.8 1109.5,443.5 1110.0,437.2 1110.5,438.4 1111.0,443.9 1111.5,439.4 1112.0,435.9 1112.5,443.6 1113.0,439.1 1113.5,435.5 1114.0,435.8 1114.5,435.6 1115.0,441.3 1115.5,448.0 1116.0,441.7 1116.5,440.2 1117.0,439.2 1117.5,436.2 1118.0,442.6 1118.5,446.4 1119.0,441.5 1119.5,443.4 1120.0,448.9 1120.5,437.8 1121.0,448.4 1121.5,441.3 1122.0,443.6 1122.5,444.1 1123.0,446.5 1123.5,436.7 1124.0,441.7 1124.5,436.6 1125.0,441.9 1125.5,439.3 1126.0,441.3 1126.5,442.3 1127.0,435.8 1127.5,444.2 1128.0,444.6 1128.5,435.6 1129.0,441.1 1129.5,442.6 1130.0,436.7 1130.5,436.9 1131.0,446.0 1131.5,440.8 1132.0,438.1 1132.5,444.7 1133.0,443.2 1133.5,442.3 1134.0,444.1 1134.5,449.5 1135.0,442.9 1135.5,443.8 1136.0,446.9 1136.5,437.9 1137.0,444.7 1137.5,445.8 1138.0,452.5 1138.5,450.9 1139.0,456.9 1139.5,455.5 1140.0,447.9 1140.5,456.1 1141.0,444.1 1141.5,448.9 1142.0,453.2 1142.5,457.9 1143.0,459.5 1143.5,453.4 1144.0,453.5 1144.5,456.5 1145.0,457.9 1145.5,456.3 1146.0,450.7 1146.5,459.3 1147.0,454.6 1147.5,453.3 1148.0,449.5 1148.5,454.5 1149.0,456.0 1149.5,440.0 1150.0,446.5 1150.5,457.3 1151.0,453.9 1151.5,457.4 1152.0,459.9 1152.5,453.7 1153.0,454.5 1153.5,449.6 1154.0,457.7 1154.5,453.1 1155.0,453.1 1155.5,454.6 1156.0,445.3 1156.5,452.9 1157.0,459.0 1157.5,453.9 1158.0,458.1 1158.5,458.8 1159.0,457.6 1159.5,459.6 1160.0,450.5 1160.5,459.0 1161.0,452.7 1161.5,451.9 1162.0,454.4 1162.5,456.5 1163.0,461.8 1163.5,454.8 1164.0,454.6 1164.5,459.7 1165.0,465.0 1165.5,454.4 1166.0,459.1 1166.5,450.4 1167.0,453.1 1167.5,451.5 1168.0,459.7 1168.5,455.4 1169.0,463.4 1169.5,456.5 1170.0,460.2 1170.5,461.0 1171.0,455.9 1171.5,462.7 1172.0,456.7 1172.5,458.3 1173.0,456.6 1173.5,457.9 1174.0,459.0 1174.5,458.6 1175.0,457.0 1175.5,458.2 1176.0,446.7 1176.5,457.4 1177.0,448.4 1177.5,452.6 1178.0,452.8 1178.5,455.2 1179.0,454.8 1179.5,464.4 1180.0,454.5 1180.5,458.0 1181.0,447.9 1181.5,452.1 1182.0,452.8 1182.5,454.9 1183.0,458.7 1183.5,446.7 1184.0,456.7 1184.5,458.1 1185.0,459.6 1185.5,456.4 1186.0,465.8 1186.5,454.0 1187.0,446.0 1187.5,454.8 1188.0,456.8 1188.5,453.2 1189.0,453.7 1189.5,456.0 1190.0,455.5 1190.5,455.4 1191.0,454.9 1191.5,453.3 1192.0,458.5 1192.5,459.0 1193.0,457.9 1193.5,459.9 1194.0,461.6 1194.5,447.8 1195.0,454.6 1195.5,454.4 1196.0,451.1 1196.5,457.6 1197.0,457.5 1197.5,457.2 1198.0,457.7 1198.5,454.7 1199.0,454.2 1199.5,452.4 1200.0,461.0 1200.5,458.1 1201.0,459.6 1201.5,455.5 1202.0,461.8 1202.5,453.4 1203.0,446.8 1203.5,460.5 1204.0,451.7 1204.5,449.5 1205.0,457.2 1205.5,455.6 1206.0,459.9 1206.5,453.3 1207.0,454.4 1207.5,455.2 1208.0,455.9 1208.5,447.7 1209.0,457.3 1209.5,461.3 1210.0,459.7 1210.5,444.3 1211.0,453.4 1211.5,454.6 1212.0,451.3 1212.5,443.8 1213.0,452.6 1213.5,459.1 1214.0,456.5 1214.5,455.6 1215.0,454.4 1215.5,461.9 1216.0,459.5 1216.5,452.8 1217.0,454.4 1217.5,452.2 1218.0,457.2 1218.5,460.7 1219.0,452.4 1219.5,450.7 1220.0,453.1 1220.5,452.8 1221.0,461.1 1221.5,456.2 1222.0,448.7 1222.5,449.5 1223.0,456.5 1223.5,457.3 1224.0,455.9 1224.5,451.8 1225.0,456.0 1225.5,455.7 1226.0,452.5 1226.5,455.6 1227.0,454.0 1227.5,450.3 1228.0,452.0 1228.5,455.3 1229.0,453.4 1229.5,448.5 1230.0,453.7 1230.5,460.6 1231.0,456.7 1231.5,453.9 1232.0,455.0 1232.5,448.3 1233.0,456.2 1233.5,454.7 1234.0,457.1 1234.5,456.0 1235.0,455.4 1235.5,450.9 1236.0,457.2 1236.5,457.0 1237.0,460.1 1237.5,453.6 1238.0,456.8 1238.5,456.9 1239.0,455.0 1239.5,458.0 1240.0,454.0 1240.5,457.2 1241.0,463.7 1241.5,448.0 1242.0,458.3 1242.5,454.0 1243.0,452.4 1243.5,457.6 1244.0,450.3 1244.5,458.0 1245.0,459.0 1245.5,443.8 1246.0,452.9 1246.5,451.8 1247.0,456.5 1247.5,451.8 1248.0,461.0 1248.5,445.6 1249.0,451.6 1249.5,456.0 1250.0,453.4 1250.5,451.1 1251.0,456.3 1251.5,455.6 1252.0,458.1 1252.5,445.8 1253.0,460.1 1253.5,451.3 1254.0,448.7 1254.5,451.2 1255.0,453.7 1255.5,452.7 1256.0,456.4 1256.5,461.1 1257.0,459.0 1257.5,457.6 1258.0,454.8 1258.5,448.0 1259.0,450.5 1259.5,459.2 1260.0,454.7 1260.5,452.4 1261.0,470.0 1261.5,450.0 1262.0,448.4 1262.5,452.4 1263.0,459.0 1263.5,455.0 1264.0,458.8 1264.5,452.0 1265.0,451.6 1265.5,452.1 1266.0,454.1 1266.5,453.9 1267.0,453.4 1267.5,458.2 1268.0,448.0 1268.5,450.1 1269.0,457.9 1269.5,445.6 1270.0,459.3 1270.5,455.9 1271.0,456.3 1271.5,452.6 1272.0,448.0 1272.5,455.4 1273.0,453.6 1273.5,455.5 1274.0,456.6 1274.5,451.3 1275.0,453.5 1275.5,453.6 1276.0,448.9 1276.5,454.3 1277.0,447.3 1277.5,446.6 1278.0,453.6 1278.5,447.9 1279.0,448.6 1279.5,439.7 1280.0,443.9 1280.5,445.4 1281.0,449.0 1281.5,447.1 1282.0,443.9 1282.5,447.4 1283.0,444.2 1283.5,443.6" fill="none" stroke="#f00" stroke-width="2" stroke-linejoin="miter"/>
<polygon points="917,474 917.0,450.9 917.5,455.4 918.0,455.3 918.5,456.4 919.0,456.5 919.5,455.3 920.0,462.9 920.5,452.0 921.0,451.1 921.5,451.5 922.0,453.7 922.5,456.6 923.0,458.0 923.5,456.1 924.0,449.9 924.5,451.8 925.0,458.8 925.5,457.9 926.0,448.4 926.5,453.4 927.0,451.8 927.5,452.2 928.0,447.4 928.5,451.1 929.0,458.5 929.5,457.0 930.0,453.1 930.5,450.8 931.0,457.7 931.5,453.2 932.0,456.6 932.5,449.3 933.0,455.6 933.5,457.8 934.0,455.0 934.5,459.2 935.0,456.2 935.5,455.1 936.0,452.2 936.5,454.7 937.0,454.0 937.5,452.4 938.0,450.8 938.5,448.8 939.0,452.6 939.5,443.6 940.0,452.3 940.5,450.3 941.0,448.4 941.5,450.2 942.0,452.1 942.5,451.1 943.0,445.0 943.5,454.2 944.0,445.9 944.5,445.1 945.0,444.4 945.5,447.1 946.0,450.0 946.5,439.6 947.0,438.5 947.5,437.7 948.0,446.4 948.5,438.8 949.0,438.2 949.5,437.5 950.0,434.8 950.5,449.3 951.0,430.9 951.5,440.2 952.0,437.5 952.5,440.0 953.0,429.2 953.5,434.4 954.0,438.9 954.5,440.8 955.0,436.9 955.5,435.3 956.0,438.8 956.5,437.2 957.0,438.7 957.5,442.2 958.0,442.6 958.5,436.8 959.0,439.8 959.5,440.4 960.0,439.6 960.5,442.3 961.0,443.1 961.5,440.8 962.0,444.1 962.5,438.5 963.0,445.0 963.5,442.1 964.0,444.4 964.5,445.6 965.0,436.8 965.5,438.4 966.0,440.7 966.5,447.0 967.0,445.3 967.5,440.8 968.0,445.7 968.5,441.9 969.0,443.5 969.5,448.0 970.0,439.8 970.5,439.7 971.0,443.8 971.5,429.2 972.0,430.7 972.5,434.5 973.0,434.5 973.5,430.5 974.0,430.9 974.5,425.5 975.0,422.3 975.5,418.8 976.0,416.7 976.5,414.8 977.0,408.3 977.5,405.2 978.0,402.5 978.5,397.5 979.0,394.2 979.5,389.7 980.0,388.8 980.5,383.4 981.0,381.8 981.5,377.0 982.0,374.2 982.5,369.5 983.0,367.4 983.5,363.4 984.0,360.2 984.5,355.8 985.0,352.2 985.5,357.0 986.0,359.5 986.5,362.0 987.0,365.7 987.5,368.8 988.0,369.9 988.5,376.6 989.0,379.9 989.5,381.4 990.0,383.6 990.5,387.4 991.0,389.0 991.5,391.1 992.0,394.7 992.5,396.1 993.0,398.9 993.5,403.4 994.0,406.0 994.5,405.6 995.0,409.3 995.5,410.2 996.0,408.6 996.5,412.4 997.0,411.7 997.5,410.1 998.0,412.4 998.5,407.7 999.0,403.1 999.5,398.6 1000.0,394.5 1000.5,390.0 1001.0,385.0 1001.5,380.0 1002.0,371.3 1002.5,367.3 1003.0,359.9 1003.5,353.5 1004.0,350.7 1004.5,341.1 1005.0,335.6 1005.5,333.1 1006.0,327.2 1006.5,320.0 1007.0,316.2 1007.5,311.7 1008.0,304.3 1008.5,301.2 1009.0,296.0 1009.5,292.0 1010.0,286.7 1010.5,281.1 1011.0,274.0 1011.5,269.1 1012.0,264.6 1012.5,261.4 1013.0,252.2 1013.5,248.5 1014.0,237.1 1014.5,224.3 1015.0,210.1 1015.5,200.9 1016.0,186.0 1016.5,176.9 1017.0,162.3 1017.5,164.6 1018.0,167.0 1018.5,177.3 1019.0,188.7 1019.5,201.0 1020.0,211.8 1020.5,223.8 1021.0,235.3 1021.5,246.3 1022.0,262.3 1022.5,277.0 1023.0,290.3 1023.5,306.0 1024.0,318.8 1024.5,331.3 1025.0,341.2 1025.5,352.4 1026.0,359.8 1026.5,371.9 1027.0,381.5 1027.5,389.1 1028.0,394.1 1028.5,401.0 1029.0,404.1 1029.5,410.0 1030.0,414.4 1030.5,422.4 1031.0,430.6 1031.5,432.9 1032.0,423.1 1032.5,420.9 1033.0,420.4 1033.5,419.1 1034.0,416.2 1034.5,414.2 1035.0,413.3 1035.5,411.3 1036.0,409.2 1036.5,407.9 1037.0,404.0 1037.5,400.8 1038.0,394.4 1038.5,390.5 1039.0,385.6 1039.5,384.7 1040.0,383.3 1040.5,377.7 1041.0,372.3 1041.5,373.3 1042.0,370.4 1042.5,368.6 1043.0,367.0 1043.5,367.4 1044.0,363.9 1044.5,359.0 1045.0,357.5 1045.5,354.4 1046.0,354.5 1046.5,357.4 1047.0,359.1 1047.5,363.1 1048.0,365.0 1048.5,371.3 1049.0,374.8 1049.5,374.2 1050.0,381.2 1050.5,384.6 1051.0,385.4 1051.5,390.1 1052.0,394.7 1052.5,398.2 1053.0,402.5 1053.5,403.9 1054.0,408.0 1054.5,410.7 1055.0,414.2 1055.5,419.1 1056.0,418.0 1056.5,416.7 1057.0,422.0 1057.5,421.9 1058.0,419.7 1058.5,424.7 1059.0,427.6 1059.5,428.0 1060.0,429.4 1060.5,431.0 1061.0,431.5 1061.5,427.6 1062.0,431.4 1062.5,430.1 1063.0,430.1 1063.5,426.4 1064.0,433.3 1064.5,432.8 1065.0,428.1 1065.5,420.7 1066.0,423.3 1066.5,426.6 1067.0,422.4 1067.5,420.0 1068.0,420.1 1068.5,419.5 1069.0,416.4 1069.5,411.3 1070.0,413.4 1070.5,410.6 1071.0,407.5 1071.5,405.3 1072.0,401.7 1072.5,402.2 1073.0,400.3 1073.5,395.5 1074.0,393.1 1074.5,394.5 1075.0,392.9 1075.5,390.4 1076.0,391.5 1076.5,387.5 1077.0,383.3 1077.5,386.1 1078.0,385.9 1078.5,383.8 1079.0,382.1 1079.5,381.8 1080.0,382.7 1080.5,380.2 1081.0,384.3 1081.5,384.2 1082.0,384.6 1082.5,384.8 1083.0,390.1 1083.5,388.7 1084.0,391.7 1084.5,391.2 1085.0,395.6 1085.5,397.0 1086.0,400.0 1086.5,400.5 1087.0,401.6 1087.5,409.4 1088.0,412.1 1088.5,412.0 1089.0,416.1 1089.5,415.3 1090.0,421.2 1090.5,423.2 1091.0,419.8 1091.5,426.2 1092.0,425.4 1092.5,429.3 1093.0,420.3 1093.5,435.0 1094.0,432.7 1094.5,426.8 1095.0,427.8 1095.5,434.6 1096.0,438.9 1096.5,434.0 1097.0,444.2 1097.5,440.5 1098.0,440.1 1098.5,441.1 1099.0,440.0 1099.5,437.3 1100.0,436.4 1100.5,432.0 1101.0,432.5 1101.5,442.1 1102.0,431.6 1102.5,436.2 1103.0,432.7 1103.5,438.7 1104.0,433.2 1104.5,434.1 1105.0,431.9 1105.5,428.7 1106.0,436.4 1106.5,428.4 1107.0,430.6 1107.5,430.5 1108.0,432.6 1108.5,435.5 1109.0,429.8 1109.5,443.5 1110.0,437.2 1110.5,438.4 1111.0,443.9 1111.5,439.4 1112.0,435.9 1112.5,443.6 1113.0,439.1 1113.5,435.5 1114.0,435.8 1114.5,435.6 1115.0,441.3 1115.5,448.0 1116.0,441.7 1116.5,440.2 1117.0,439.2 1117.5,436.2 1118.0,442.6 1118.5,446.4 1119.0,441.5 1119.5,443.4 1120.0,448.9 1120.5,437.8 1121.0,448.4 1121.5,441.3 1122.0,443.6 1122.5,444.1 1123.0,446.5 1123.5,436.7 1124.0,441.7 1124.5,436.6 1125.0,441.9 1125.5,439.3 1126.0,441.3 1126.5,442.3 1127.0,435.8 1127.5,444.2 1128.0,444.6 1128.5,435.6 1129.0,441.1 1129.5,442.6 1130.0,436.7 1130.5,436.9 1131.0,446.0 1131.5,440.8 1132.0,438.1 1132.5,444.7 1133.0,443.2 1133.5,442.3 1134.0,444.1 1134.5,449.5 1135.0,442.9 1135.5,443.8 1136.0,446.9 1136.5,437.9 1137.0,444.7 1137.5,445.8 1138.0,452.5 1138.5,450.9 1139.0,456.9 1139.5,455.5 1140.0,447.9 1140.5,456.1 1141.0,444.1 1141.5,448.9 1142.0,453.2 1142.5,457.9 1143.0,459.5 1143.5,453.4 1144.0,453.5 1144.5,456.5 1145.0,457.9 1145.5,456.3 1146.0,450.7 1146.5,459.3 1147.0,454.6 1147.5,453.3 1148.0,449.5 1148.5,454.5 1149.0,456.0 1149.5,440.0 1150.0,446.5 1150.5,457.3 1151.0,453.9 1151.5,457.4 1152.0,459.9 1152.5,453.7 1153.0,454.5 1153.5,449.6 1154.0,457.7 1154.5,453.1 1155.0,453.1 1155.5,454.6 1156.0,445.3 1156.5,452.9 1157.0,459.0 1157.5,453.9 1158.0,458.1 1158.5,458.8 1159.0,457.6 1159.5,459.6 1160.0,450.5 1160.5,459.0 1161.0,452.7 1161.5,451.9 1162.0,454.4 1162.5,456.5 1163.0,461.8 1163.5,454.8 1164.0,454.6 1164.5,459.7 1165.0,465.0 1165.5,454.4 1166.0,459.1 1166.5,450.4 1167.0,453.1 1167.5,451.5 1168.0,459.7 1168.5,455.4 1169.0,463.4 1169.5,456.5 1170.0,460.2 1170.5,461.0 1171.0,455.9 1171.5,462.7 1172.0,456.7 1172.5,458.3 1173.0,456.6 1173.5,457.9 1174.0,459.0 1174.5,458.6 1175.0,457.0 1175.5,458.2 1176.0,446.7 1176.5,457.4 1177.0,448.4 1177.5,452.6 1178.0,452.8 1178.5,455.2 1179.0,454.8 1179.5,464.4 1180.0,454.5 1180.5,458.0 1181.0,447.9 1181.5,452.1 1182.0,452.8 1182.5,454.9 1183.0,458.7 1183.5,446.7 1184.0,456.7 1184.5,458.1 1185.0,459.6 1185.5,456.4 1186.0,465.8 1186.5,454.0 1187.0,446.0 1187.5,454.8 1188.0,456.8 1188.5,453.2 1189.0,453.7 1189.5,456.0 1190.0,455.5 1190.5,455.4 1191.0,454.9 1191.5,453.3 1192.0,458.5 1192.5,459.0 1193.0,457.9 1193.5,459.9 1194.0,461.6 1194.5,447.8 1195.0,454.6 1195.5,454.4 1196.0,451.1 1196.5,457.6 1197.0,457.5 1197.5,457.2 1198.0,457.7 1198.5,454.7 1199.0,454.2 1199.5,452.4 1200.0,461.0 1200.5,458.1 1201.0,459.6 1201.5,455.5 1202.0,461.8 1202.5,453.4 1203.0,446.8 1203.5,460.5 1204.0,451.7 1204.5,449.5 1205.0,457.2 1205.5,455.6 1206.0,459.9 1206.5,453.3 1207.0,454.4 1207.5,455.2 1208.0,455.9 1208.5,447.7 1209.0,457.3 1209.5,461.3 1210.0,459.7 1210.5,444.3 1211.0,453.4 1211.5,454.6 1212.0,451.3 1212,474" fill="url(#rb)" transform="translate(0,0.4)"/>
<line x1="985.5" x2="985.5" y1="140" y2="352" stroke="#f4f08c"/><text transform="translate(1001.0,234) rotate(-90)" text-anchor="start" fill="#f0f000" font-size="16">4700 (C2)</text><line x1="1018.5" x2="1018.5" y1="140" y2="165" stroke="#f4f08c"/><text transform="translate(1035.5,234) rotate(-90)" text-anchor="start" fill="#f0f000" font-size="16">5150 (C2)</text><line x1="1048.5" x2="1048.5" y1="140" y2="366" stroke="#f4f08c"/><text transform="translate(1063.0,234) rotate(-90)" text-anchor="start" fill="#f0f000" font-size="16">5550 (C2)</text><line x1="1081.5" x2="1081.5" y1="140" y2="383" stroke="#f4f08c"/><text transform="translate(1095.5,234) rotate(-90)" text-anchor="start" fill="#f0f000" font-size="16">6000 (NH2?)</text>
<text x="881" y="518" fill="#f00" font-size="13.8" font-weight="bold" textLength="66.2" lengthAdjust="spacingAndGlyphs">Angstroms</text>
<rect x="875" y="539" width="410" height="46.5" fill="#000"/>
<rect x="917" y="539" width="294" height="46.5" fill="url(#rb2)"/>
</svg>


<!-- lower right panel -->
<div class="abs hl" style="left:443px;top:523px;width:839px;background:#fff"></div>
<div class="abs hl" style="left:875px;top:587px;width:407px;background:#fff"></div>
<div class="abs hl" style="left:875px;top:536px;width:407px;background:#8c8c8c"></div>
<div class="abs hl" style="left:875px;top:537px;width:407px;height:2px;background:#fff"></div>
<div class="abs" style="left:785px;top:608px;width:244px;height:50px;border:1px solid #d5dfe5;border-radius:3px"></div>
<div class="abs" style="left:876.5px;top:626px;font-size:11px">Y-Axis</div>

<!-- zoom window -->
<div class="abs" id="zw">
  <div class="abs inner"></div>
</div>
<svg class="abs" style="left:16px;top:115px" width="16" height="8" viewBox="0 0 17 9" preserveAspectRatio="none"><rect width="17" height="9" fill="url(#ic)"/><polyline points="1,8 8,1.5 13,8" fill="none" stroke="#111" stroke-width="1"/></svg>
<div class="abs" style="left:37px;top:112px;font-size:12.6px">Zoom</div>
<div class="abs capbtns" style="left:260px;top:105px;width:57px;height:19px"></div>
<div class="abs capdiv" style="left:288px;top:105px"></div>
<div class="abs capbtns" style="left:334px;top:105px;width:103px;height:19px"></div>
<div class="abs capdiv" style="left:362px;top:105px"></div>
<div class="abs capdiv" style="left:389px;top:105px"></div>
<svg class="abs" style="left:260px;top:105px" width="180" height="20" viewBox="260 105 180 20">
 <g fill="#fff" stroke="#3c4558" stroke-width="1.150">
  <rect x="343.500" y="114.500" width="11" height="4" rx="1"/>
  <path d="M370.500 109.500 h11 v9 h-11z M373.500 112.500 v3 h5 v-3z" fill-rule="evenodd"/>
  <path d="M408 109.500 h3 l2.500 3 2.500 -3 h3 l-4 4.700 4 4.800 h-3 l-2.500 -3 -2.500 3 h-3 l4 -4.800z"/>
  <rect x="268.500" y="109.500" width="12" height="9" rx="1" fill="#e8eef6"/><rect x="266.500" y="111.500" width="6" height="5"/><rect x="268" y="113" width="2" height="2" fill="#4a5468" stroke="none"/>
  <rect x="295.500" y="109.500" width="12" height="9" rx="1" fill="#e8eef6"/><rect x="303.500" y="111.500" width="6" height="5"/><rect x="306" y="113" width="2" height="2" fill="#4a5468" stroke="none"/>
 </g>
 <g stroke="#9aa6b6" stroke-width="1"><path d="M274.500 110 v8 M276.500 110 v8 M299.500 110 v8 M301.500 110 v8"/></g>
</svg>

<div class="abs" id="zimg">
 <svg width="367" height="364" style="position:absolute;left:0;top:-1px">
  <defs>
   <filter id="nz" x="0" y="0" width="100%" height="100%"><feTurbulence type="fractalNoise" baseFrequency="0.75" numOctaves="2" seed="3"/><feColorMatrix type="matrix" values="0 0 0 0 .30  0 0 0 0 .19  0 0 0 0 .05  .36 0 0 0 -0.065"/></filter>
   <radialGradient id="gp"><stop offset="0" stop-color="#8020ff"/><stop offset="1" stop-color="#8020ff" stop-opacity="0"/></radialGradient>
   <radialGradient id="gc"><stop offset="0" stop-color="#10e8e0"/><stop offset="1" stop-color="#10c0c0" stop-opacity="0"/></radialGradient>
   <radialGradient id="gg"><stop offset="0" stop-color="#90b010"/><stop offset="1" stop-color="#809010" stop-opacity="0"/></radialGradient>
   <radialGradient id="gr"><stop offset="0" stop-color="#ff5020"/><stop offset="1" stop-color="#e04010" stop-opacity="0"/></radialGradient>
   <radialGradient id="gk"><stop offset="0" stop-color="#ff9070"/><stop offset="1" stop-color="#e06040" stop-opacity="0"/></radialGradient>
  </defs>
  <rect width="367" height="364" fill="#140d04"/>
  <rect width="367" height="364" filter="url(#nz)"/>
  <g opacity=".32"><ellipse cx="256" cy="176" rx="12" ry="11" fill="url(#gp)"/><ellipse cx="279" cy="176" rx="11" ry="10" fill="url(#gc)"/><ellipse cx="298" cy="176" rx="11" ry="9" fill="url(#gg)"/><ellipse cx="322" cy="176" rx="13" ry="9" fill="url(#gr)"/></g>
  <rect x="0" y="169" width="367" height="14" fill="#80341a"/>
  <rect x="0" y="169" width="367" height="14" filter="url(#nz)" opacity=".6"/>
  <ellipse cx="256" cy="176" rx="11" ry="7" fill="url(#gp)"/>
  <ellipse cx="279" cy="176" rx="10" ry="7" fill="url(#gc)"/>
  <ellipse cx="298" cy="176" rx="10" ry="6" fill="url(#gg)"/>
  <ellipse cx="322" cy="176" rx="13" ry="6" fill="url(#gr)"/>
  <ellipse cx="18" cy="175" rx="6" ry="6" fill="url(#gk)"/>
  <rect x="0" y="169" width="367" height="2" fill="#ff9a10"/>
  <rect x="0" y="181" width="367" height="2" fill="#ff9a10"/>
 </svg>
</div>

<!-- arrows -->
<svg class="abs" style="left:0;top:0;pointer-events:none" width="500" height="520" viewBox="0 0 500 520">
 <g fill="#e9c4a3" stroke="none">
  <polygon points="120,217 130.2,217 66.2,279.3 72.4,286.3 42.6,295.2 53.1,266.2 60.500,274"/>
  <polygon points="379.500,215 390,215 325.400,278.5 331.100,285.6 301.5,294.1 313,265.2 320.100,273.2"/>
 </g>
</svg>

<!-- right strip of zoom window -->
<div class="abs btn" style="left:391px;top:240px;width:28px;height:26px"><div class="abs tri-up" style="left:9px;top:10px"></div></div>
<div class="abs btn" style="left:391px;top:268px;width:28px;height:26px"><div class="abs tri-dn" style="left:9px;top:10px"></div></div>
<div class="abs btn" style="left:391px;top:337px;width:28px;height:26px"><div class="abs tri-up" style="left:9px;top:10px"></div></div>
<div class="abs btn" style="left:391px;top:365px;width:28px;height:26px"><div class="abs tri-dn" style="left:9px;top:10px"></div></div>
<div class="abs btn" style="left:388px;top:404px;width:34px;height:23px;font-size:11px;text-align:center;line-height:21px">Reset</div>
<div class="abs cb" style="left:387px;top:440px"></div>
<svg class="abs" style="left:388px;top:441px" width="11" height="11" viewBox="0 0 11 11"><polyline points="2,5 4.5,9 9,1.5" fill="none" stroke="#2a3a90" stroke-width="1.8"/></svg>
<div class="abs" style="left:402px;top:440px;font-size:10.8px">Help</div>
<div class="abs cb" style="left:387px;top:469px"></div>
<div class="abs" style="left:402px;top:463px;font-size:10.5px;line-height:13px">Show<br>Guide</div>
<div class="abs hl" style="left:16px;top:497px;width:420px;background:#fff"></div>
<div class="abs" style="left:24px;top:506px;font-size:10.9px;white-space:nowrap;width:412px;overflow:hidden">To Zoom: Position your mouse cursor on the spot in the image to which you want to zoom</div>

<!-- labels -->
<div class="abs label" style="left:76px;top:160px;width:102px;height:58px;line-height:57px;padding-right:2px">Comet</div>
<div class="abs label" style="left:313px;top:158px;width:150px;height:58px;line-height:57px;padding-right:4px">Spectrum</div>

<!-- caption -->
<div class="abs" id="cap">Equipment: 80mm refractor, Star Analyser grating, Canon 1100 D.<br>Processed using RSpec spectroscopy software</div>

</body></html>
